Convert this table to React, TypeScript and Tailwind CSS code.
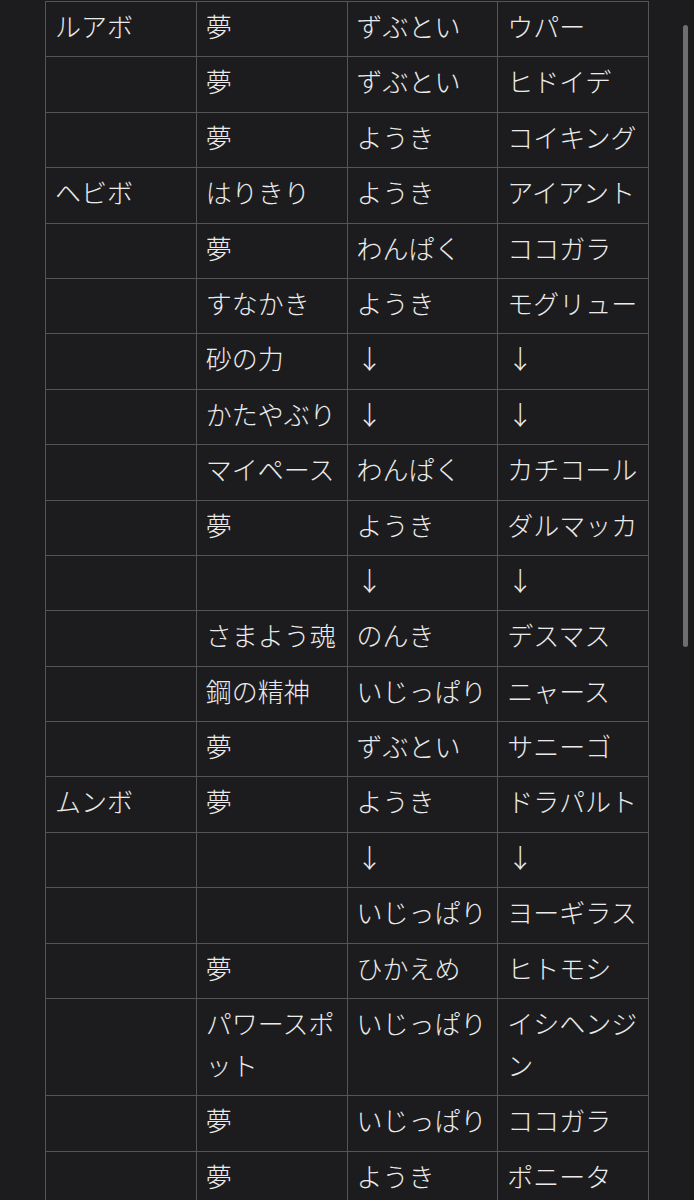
const rows: [string, string, string, string][] = [
  ['ルアボ', '夢', 'ずぶとい', 'ウパー'],
  ['', '夢', 'ずぶとい', 'ヒドイデ'],
  ['', '夢', 'ようき', 'コイキング'],
  ['ヘビボ', 'はりきり', 'ようき', 'アイアント'],
  ['', '夢', 'わんぱく', 'ココガラ'],
  ['', 'すなかき', 'ようき', 'モグリュー'],
  ['', '砂の力', '↓', '↓'],
  ['', 'かたやぶり', '↓', '↓'],
  ['', 'マイペース', 'わんぱく', 'カチコール'],
  ['', '夢', 'ようき', 'ダルマッカ'],
  ['', '', '↓', '↓'],
  ['', 'さまよう魂', 'のんき', 'デスマス'],
  ['', '鋼の精神', 'いじっぱり', 'ニャース'],
  ['', '夢', 'ずぶとい', 'サニーゴ'],
  ['ムンボ', '夢', 'ようき', 'ドラパルト'],
  ['', '', '↓', '↓'],
  ['', '', 'いじっぱり', 'ヨーギラス'],
  ['', '夢', 'ひかえめ', 'ヒトモシ'],
  ['', 'パワースポット', 'いじっぱり', 'イシヘンジン'],
  ['', '夢', 'いじっぱり', 'ココガラ'],
  ['', '夢', 'ようき', 'ポニータ'],
];

const App = () => {
  return (
    <div
      className="relative h-[1200px] w-[694px] overflow-hidden bg-[#1c1c1e] pt-px text-[#ebebeb]"
      style={{ fontFamily: '"Noto Sans CJK JP", "Noto Sans", sans-serif' }}
    >
      <table className="ml-[45px] w-[604px] table-fixed border-collapse">
        <tbody>
          {rows.map((row, i) => (
            <tr key={i}>
              {row.map((cell, j) => (
                <td
                  key={j}
                  className="border border-[#555557] pb-[9.4px] pl-[9px] pr-[5px] pt-[3px] align-top text-[26px] font-light leading-[42px] [line-break:anywhere]"
                >
                  {cell}
                </td>
              ))}
            </tr>
          ))}
        </tbody>
      </table>

      {/* scrollbar */}
      <div className="absolute left-[683px] top-[25px] h-[622px] w-[5px] rounded-full bg-[#6e6e6e]" />
    </div>
  );
};

export default App;
